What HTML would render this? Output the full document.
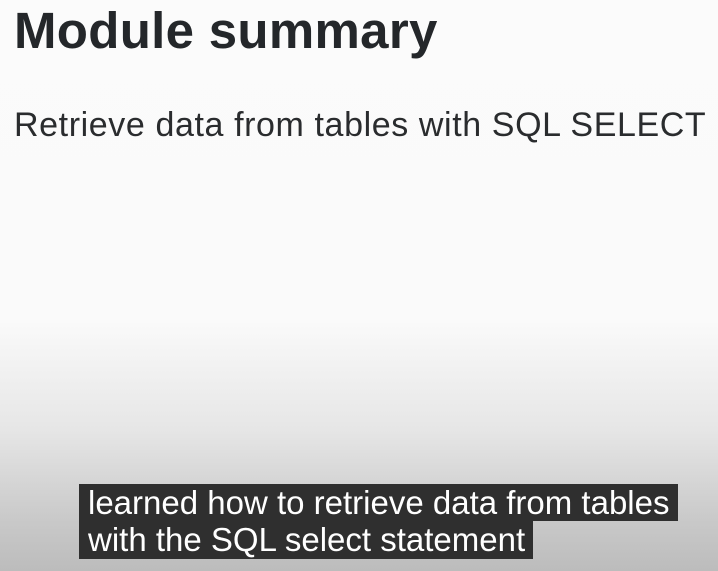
<!DOCTYPE html>
<html><head><style>
body{margin:0;width:718px;height:571px;overflow:hidden;font-family:"Liberation Sans",sans-serif;
background:linear-gradient(to bottom,#fbfbfb 0,#fafafa 320px,#e6e6e6 430px,#c9c9c9 520px,#bcbcbc 571px);position:relative}
.t{position:absolute;left:14px;top:1px;font-size:51px;font-weight:bold;color:#24272a;letter-spacing:0.3px;white-space:nowrap}
.s{position:absolute;left:14px;top:106px;font-size:34px;color:#2a2c2e;white-space:nowrap;letter-spacing:0.6px}
.c{position:absolute;left:79px;background:#2f2f2f;color:#fff;font-size:33px;line-height:37px;padding:0 9px 0 9px;white-space:nowrap;letter-spacing:0px}
</style></head><body>
<div class="t">Module summary</div>
<div class="s">Retrieve data from tables with SQL SELECT</div>
<div class="c" style="top:484px;width:581px">learned how to retrieve data from tables</div>
<div class="c" style="top:521px;height:38px;width:436px">with the SQL select statement</div>
</body></html>
